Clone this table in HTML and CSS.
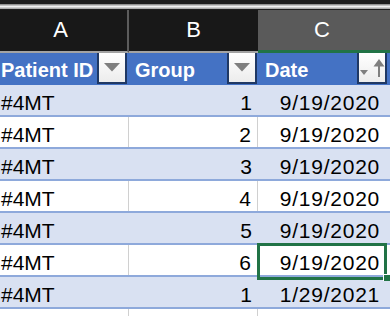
FILE: index.html
```html
<!DOCTYPE html>
<html>
<head>
<meta charset="utf-8">
<link rel="stylesheet" href="styles.css">
</head>
<body>
<div class="sheet">
  <div class="topbar"><div class="topline"></div></div>
  <div class="colheads">
    <div class="ch ch-a">A</div>
    <div class="ch ch-b">B</div>
    <div class="ch ch-c sel">C</div>
  </div>
  <div class="table">
    <div class="row head">
      <div class="cell ca">Patient ID<span class="fbtn"><svg width="16" height="9" viewBox="0 0 16 9"><path d="M0 0H16L8 8.5Z" fill="#7f7f7f"/></svg></span></div>
      <div class="cell cb">Group<span class="fbtn"><svg width="16" height="9" viewBox="0 0 16 9"><path d="M0 0H16L8 8.5Z" fill="#7f7f7f"/></svg></span></div>
      <div class="cell cc">Date<span class="fbtn sort"><svg width="26" height="29" viewBox="0 0 26 29"><path d="M1 17H9L5 22Z" fill="#7f7f7f"/><path d="M20 6L14.5 13.5H19V24H21V13.5H25.5Z" fill="#7f7f7f"/></svg></span></div>
    </div>
    <div class="row band"><div class="cell ca">#4MT</div><div class="cell cb num">1</div><div class="cell cc num">9/19/2020</div></div>
    <div class="row"><div class="cell ca">#4MT</div><div class="cell cb num">2</div><div class="cell cc num">9/19/2020</div></div>
    <div class="row band"><div class="cell ca">#4MT</div><div class="cell cb num">3</div><div class="cell cc num">9/19/2020</div></div>
    <div class="row"><div class="cell ca">#4MT</div><div class="cell cb num">4</div><div class="cell cc num">9/19/2020</div></div>
    <div class="row band"><div class="cell ca">#4MT</div><div class="cell cb num">5</div><div class="cell cc num">9/19/2020</div></div>
    <div class="row"><div class="cell ca">#4MT</div><div class="cell cb num">6</div><div class="cell cc num active">9/19/2020<span class="handle"></span></div></div>
    <div class="row band"><div class="cell ca">#4MT</div><div class="cell cb num">1</div><div class="cell cc num">1/29/2021</div></div>
    <div class="row plain"><div class="cell ca"></div><div class="cell cb"></div><div class="cell cc"></div></div>
  </div>
</div>
</body>
</html>
```

FILE: styles.css
```css
html, body {
  margin: 0;
  padding: 0;
  background: #ffffff;
}
.sheet {
  width: 390px;
  height: 316px;
  overflow: hidden;
  font-family: "Liberation Sans", Arial, sans-serif;
}
.topbar {
  height: 10px;
  background: #1e1e1e;
  display: flex;
  align-items: flex-end;
}
.topline {
  height: 5px;
  width: 100%;
  margin-bottom: 1px;
  background: linear-gradient(#7a7a7a, #f2f2f2 50%, #9a9a9a);
}
.colheads {
  display: grid;
  grid-template-columns: 129px 129px 132px;
  height: 43px;
}
.ch {
  background: #181818;
  color: #ffffff;
  font-size: 22px;
  display: flex;
  align-items: center;
  justify-content: center;
  border-bottom: 2px solid #a3a3a3;
  padding-bottom: 1px;
  box-sizing: border-box;
}
.ch-a {
  border-right: 2px solid #5c5c5c;
  padding-right: 6px;
}
.ch.sel {
  background: #5a5a5a;
  border-bottom: 3px solid #217346;
  padding-right: 4px;
}
.table {
  display: flex;
  flex-direction: column;
}
.row {
  display: grid;
  grid-template-columns: 129px 129px 132px;
  height: 32px;
  background: #ffffff;
  border-bottom: 2px solid #8ea9db;
  box-sizing: border-box;
  font-size: 21px;
  line-height: 24px;
  color: #000000;
}
.row.band {
  background: #d9e1f2;
}
.row.head {
  background: #4472c4;
  border-bottom: none;
  color: #ffffff;
  font-weight: bold;
  font-size: 20px;
}
.row.plain {
  border-bottom: none;
}
.cell {
  position: relative;
  display: flex;
  align-items: flex-end;
  padding: 0 0 0 1px;
  box-sizing: border-box;
  white-space: nowrap;
}
.row:not(.band):not(.head) .ca,
.row:not(.band):not(.head) .cb {
  border-right: 1px solid #d0d0d0;
}
.row.head .cell {
  padding-bottom: 3px;
}
.row.head .cb {
  padding-left: 6px;
}
.row.head .cc {
  padding-left: 7px;
}
.cell.num {
  justify-content: flex-end;
  padding-right: 6px;
}
.row .cc.num {
  padding-right: 10px;
  letter-spacing: 0.75px;
}
.fbtn {
  position: absolute;
  top: 0;
  right: 2px;
  width: 30px;
  height: 31px;
  box-sizing: border-box;
  background: linear-gradient(#ffffff, #ececec);
  border: 2px solid #1f3864;
  border-top: none;
  display: flex;
  align-items: center;
  justify-content: center;
}
.cb .fbtn {
  right: 1px;
}
.fbtn.sort {
  right: 3px;
}
.fbtn svg {
  display: block;
}
.active::after {
  content: "";
  position: absolute;
  left: -1px;
  top: -2px;
  width: 130px;
  height: 37px;
  border: 3px solid #217346;
  box-sizing: border-box;
}
.handle {
  position: absolute;
  right: 0;
  bottom: -6px;
  width: 6px;
  height: 6px;
  background: #217346;
  border-left: 1px solid #fff;
  border-top: 1px solid #fff;
  z-index: 2;
}
```
